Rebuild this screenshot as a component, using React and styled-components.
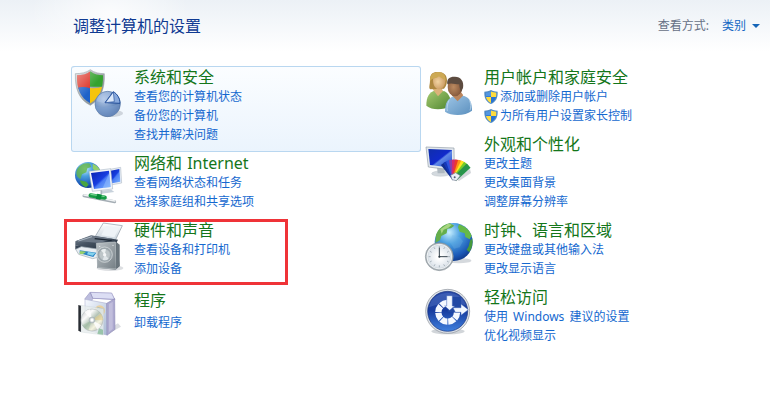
import React from 'react';
import styled, { createGlobalStyle, css } from 'styled-components';

const GlobalStyle = createGlobalStyle`
  * { box-sizing: border-box; }
  body {
    margin: 0;
    background: #fff;
    font-family: "Noto Sans", "Noto Sans CJK SC", sans-serif;
    font-size: 12px;
  }
`;

const Page = styled.main`
  width: 770px;
  height: 415px;
  overflow: hidden;
  background:
    radial-gradient(ellipse 80px 50px at 110px 14px, rgba(255, 255, 255, 0.75), rgba(255, 255, 255, 0) 100%),
    linear-gradient(#ecf1f6 0, #f0f4f8 12px, #f8fafc 34px, #fff 52px);
`;

const Header = styled.header`
  display: flex;
  align-items: center;
  justify-content: space-between;
  height: 66px;
  padding: 0 10px 14px 73px;
`;

const Heading = styled.h1`
  margin: 0;
  font-size: 16px;
  font-weight: 400;
  line-height: 20px;
  color: #0f3a92;
  white-space: nowrap;
`;

const ViewBy = styled.div`
  display: flex;
  align-items: center;
  line-height: 18px;
  color: #667085;
  white-space: nowrap;
`;

const ViewButton = styled.button`
  display: flex;
  align-items: center;
  gap: 6px;
  margin-left: 13px;
  padding: 0;
  border: 0;
  background: none;
  font: inherit;
  color: #1467c4;
`;

const Caret = styled.span`
  border: 4px solid transparent;
  border-top-color: #1565b8;
  border-bottom: 0;
`;

const Columns = styled.div`
  display: grid;
  grid-template-columns: 350px 349px;
  padding-left: 71px;
  align-items: start;
`;

const Column = styled.section`
  display: flex;
  flex-direction: column;
`;

const Category = styled.article`
  position: relative;
  display: flex;
  gap: 10px;
  margin-top: ${(p) => (p.$roomy ? 3 : 0)}px;
  padding: 0 0 7px 3px;
  border: 1px solid transparent;
  border-left: 0;
  ${(p) =>
    p.$hovered &&
    css`
      border-color: #b9d7f0;
      border-radius: 3px;
      background: linear-gradient(#fbfdff, #ebf4fd);
      box-shadow: inset 1px 0 #b9d7f0;
    `}
`;

const IconBox = styled.svg`
  flex: none;
  width: 50px;
  height: 50px;
  margin-top: 1px;
  overflow: visible;
`;

const Body = styled.div`
  display: flex;
  flex-direction: column;
  align-items: flex-start;
  gap: ${(p) => (p.$roomy ? 3 : 0)}px;
`;

const Title = styled.h2`
  margin: 0;
  font-size: 16px;
  font-weight: 400;
  line-height: 20px;
  height: 20px;
  color: #14761a;
  white-space: nowrap;
  word-spacing: 1px;
`;

const Task = styled.a`
  display: flex;
  align-items: center;
  gap: 2px;
  height: 19px;
  line-height: 19px;
  color: #1468cf;
  white-space: nowrap;
  word-spacing: 2px;
`;

const ShieldBox = styled.svg`
  flex: none;
  width: 14px;
  height: 14px;
`;

const Highlight = styled.div`
  position: absolute;
  left: -7px;
  top: -1px;
  width: 224px;
  height: 66px;
  border: 3px solid #ef3338;
  pointer-events: none;
`;

const SecurityIcon = () => (
  <IconBox viewBox="42 24 150 150">
    <defs>
      <clipPath id="secShield"><path d="M91 34c11 9 25 12 38 12 1 39-9 68-38 84C61 114 50 86 51 46c15 0 29-3 40-12z" /></clipPath>
      <linearGradient id="shieldRim" x1="0" y1="0" x2="1" y2="1"><stop offset="0" stopColor="#e8ebec" /><stop offset=".5" stopColor="#a6adb0" /><stop offset="1" stopColor="#747e84" /></linearGradient>
      <linearGradient id="shine" x1="0" y1="0" x2="1" y2="1"><stop offset="0" stopColor="#fff" stopOpacity=".5" /><stop offset=".55" stopColor="#fff" stopOpacity="0" /></linearGradient>
      <radialGradient id="disc" cx=".35" cy=".3" r=".8"><stop offset="0" stopColor="#b7cce9" /><stop offset=".55" stopColor="#7092c2" /><stop offset="1" stopColor="#3d5d94" /></radialGradient>
    </defs>
    <ellipse cx="152" cy="160" rx="37" ry="11" fill="#8d95a0" opacity=".35" />
    <path d="M91 29c12 9 28 12 42 12 2 44-10 76-42 95C57 118 45 88 46 41c17 0 33-3 45-12z" fill="url(#shieldRim)" stroke="#8e979c" strokeWidth="1.5" />
    <g clipPath="url(#secShield)">
      <path d="M45 28h45v58H45z" fill="#dc3327" /><path d="M90 28h45v52H90z" fill="#35a22f" />
      <path d="M45 85q24-8 45 0v50H45z" fill="#1e62c9" /><path d="M90 84q24 3 45-7v58H90z" fill="#f5c40d" />
      <path d="M45 28h90v108H45z" fill="url(#shine)" />
    </g>
    <circle cx="143" cy="132" r="38" fill="url(#disc)" stroke="#5878a6" strokeWidth="2" />
    <path d="M143 132 110 124a34 34 0 0 1 43-27z" fill="#b9cdea" opacity=".4" />
    <path d="M106 139q38 8 73-9c2 23-14 39-35 39-22 0-34-13-38-30z" fill="#7fa2d2" opacity=".5" />
    <path d="M160 95c12 7 20 20 20 35l-45-2z" fill="#88a9dc" stroke="#234f9a" strokeWidth="3" />
    <path d="M160 96l3 29-27 3z" fill="#dce9fa" stroke="#234f9a" strokeWidth="2" />
  </IconBox>
);

const GlobeDefs = ({ id }) => (
  <radialGradient id={id} cx=".38" cy=".25" r=".85">
    <stop offset="0" stopColor="#c8efff" /><stop offset=".35" stopColor="#4a9fe0" /><stop offset=".75" stopColor="#1b58b6" /><stop offset="1" stopColor="#0c2c77" />
  </radialGradient>
);

const NetworkIcon = () => (
  <IconBox viewBox="42 12 150 150">
    <defs>
      <GlobeDefs id="netGlobe" />
      <linearGradient id="netScreen" x1="0" y1="0" x2="1" y2="1"><stop offset="0" stopColor="#071fb0" /><stop offset=".5" stopColor="#173ee0" /><stop offset=".58" stopColor="#4a7df5" /><stop offset="1" stopColor="#7eb5ff" /></linearGradient>
    </defs>
    <circle cx="84" cy="75" r="39" fill="url(#netGlobe)" />
    <path d="M52 57c8-14 24-20 38-16l4 10-12 4-3 12-13 6-5 15-8-7c-5-7-5-16-1-24z" fill="#64b545" opacity=".8" />
    <path d="M98 41c12 5 18 11 22 19l-12 5-10-9z" fill="#92d069" /><path d="M60 91l19 4 7 9-8 8c-11-5-17-11-18-21z" fill="#48a440" />
    <path d="M139 60l43-8 3 47-38 7z" fill="#e7edf5" stroke="#a4b0bf" strokeWidth="1.5" /><path d="M145 64l33-7 3 38-33 6z" fill="url(#netScreen)" />
    <path d="M122 122l32-3 9 7-38 5z" fill="#c7d1db" />
    <path d="M87 64l65-8 6 61-61 7z" fill="#f2f5f9" stroke="#9babbd" strokeWidth="1.5" />
    <path d="M93 69l54-7 5 49-50 6z" fill="url(#netScreen)" /><path d="M148 68l-20 46 24-3z" fill="#9ec7ff" opacity=".45" />
    <path d="M124 121v12" stroke="#a9b4bd" strokeWidth="5" />
    <path d="M72 137l92 18" stroke="#a4adb4" strokeWidth="9" strokeLinecap="round" /><path d="M72 135l92 18" stroke="#f0f3f4" strokeWidth="5" strokeLinecap="round" />
    <path d="M92 136l42 7" stroke="#179c46" strokeWidth="13" strokeLinecap="round" /><path d="M93 133l39 6" stroke="#72d48e" strokeWidth="4" strokeLinecap="round" />
    <path d="M112 131l14 3-5 15-14-3z" fill="#078b3a" />
  </IconBox>
);

const PrinterIcon = () => (
  <IconBox viewBox="42 21 150 150">
    <defs>
      <linearGradient id="printTop" x1="0" y1="0" x2="1" y2="1"><stop offset="0" stopColor="#7f8b99" /><stop offset=".4" stopColor="#465362" /><stop offset="1" stopColor="#202b37" /></linearGradient>
      <linearGradient id="speaker" x1="0" y1="0" x2="1" y2="1"><stop offset="0" stopColor="#bcc3c7" /><stop offset="1" stopColor="#747e84" /></linearGradient>
      <linearGradient id="paper" x1="0" y1="0" x2="0" y2="1"><stop offset="0" stopColor="#fff" /><stop offset="1" stopColor="#c9d4dd" /></linearGradient>
    </defs>
    <ellipse cx="150" cy="162" rx="40" ry="9" fill="#747d87" opacity=".25" />
    <path d="M130 27l57 8-21 44-62-9z" fill="url(#paper)" stroke="#8c99a5" strokeWidth="2" />
    <path d="M138 35l39 6-14 29-39-6z" fill="#eef3f7" />
    <path d="M46 82l47-18 81 13-15 31-60-3-53-11z" fill="url(#printTop)" />
    <path d="M48 81l47-16 63 9-39 13z" fill="#6c7886" /><path d="M55 81l41-13" stroke="#adb8c4" strokeWidth="3" />
    <path d="M104 74l51 5" stroke="#1b2632" strokeWidth="4" />
    <path d="M46 94l68 11-5 14-63-13z" fill="#374555" />
    <path d="M47 106l17-8 54 8v23l-20 5-42-13z" fill="#e8edf1" stroke="#9da9b2" strokeWidth="2" />
    <path d="M59 109l50 7-9 13-41-11z" fill="#2a84c4" /><path d="M61 111l18 2-11 8-10-2z" fill="#98d06c" /><path d="M84 114l22 3-8 8-17-4z" fill="#84d3ed" />
    <path d="M111 87l59-4 9 73-12 11-56-6z" fill="#57636c" /><path d="M109 88l57-4 3 81-56-4z" fill="url(#speaker)" stroke="#c3cacd" strokeWidth="2" />
    <path d="M169 84l10 8v64l-11 9z" fill="#69747b" />
    <circle cx="134" cy="122" r="23" fill="#9ba5aa" stroke="#dfe4e6" strokeWidth="2" /><circle cx="134" cy="122" r="17" fill="#bdc5c8" stroke="#a0abb0" strokeWidth="2" />
    <path d="M134 122l-11-13a17 17 0 0 1 15-3z" fill="#e9eeef" /><path d="M134 122l12 12a17 17 0 0 1-18 3z" fill="#dfe5e8" /><circle cx="134" cy="122" r="5" fill="#f4f6f7" />
    <circle cx="119" cy="97" r="2" fill="#e7ecee" /><circle cx="159" cy="94" r="2" fill="#e7ecee" />
  </IconBox>
);

const ProgramsIcon = () => (
  <IconBox viewBox="42 18 150 150">
    <defs>
      <linearGradient id="boxFront" x1="0" y1="0" x2="1" y2="1"><stop offset="0" stopColor="#f7faff" /><stop offset="1" stopColor="#a9bad5" /></linearGradient>
      <linearGradient id="discShine" x1="0" y1="0" x2="1" y2="1"><stop offset="0" stopColor="#b8bec1" /><stop offset=".3" stopColor="#fafafa" /><stop offset=".5" stopColor="#b5c4b7" /><stop offset=".7" stopColor="#f4f3df" /><stop offset="1" stopColor="#999fa5" /></linearGradient>
    </defs>
    <path d="M144 147l39-22-9-10-35 20z" fill="#999eab" opacity=".35" />
    <path d="M91 22l66 8 9 15-78-5z" fill="#a6a4cf" /><path d="M91 22l64 2 9 19-66-3z" fill="#dcdef4" stroke="#9592bf" strokeWidth="2" />
    <path d="M74 42l16-20 8 18-6 21z" fill="#bcbdde" stroke="#8e8db7" strokeWidth="1.5" />
    <path d="M75 43l65 12 1 95-66-16z" fill="url(#boxFront)" stroke="#a2a4c9" strokeWidth="1.5" />
    <path d="M140 55l24-14 1 92-24 18z" fill="#aca9cf" stroke="#827fae" strokeWidth="1.5" /><path d="M147 57l11-7v82l-11 9z" fill="#d3d0e7" opacity=".55" />
    <circle cx="119" cy="77" r="16" fill="#f2c978" opacity=".65" /><path d="M112 65l20 7-5 18-19-5z" fill="#75a9d0" opacity=".5" />
    <path d="M55 60l8 2v79l-8-4z" fill="#292d33" />
    <path d="M63 61l68 10v79l-68-9z" fill="#e8eeee" opacity=".78" stroke="#b9c5ca" />
    <circle cx="96" cy="105" r="33" fill="url(#discShine)" stroke="#a8b1b3" strokeWidth="1.5" />
    <path d="M96 105L73 81a32 32 0 0 1 17-8zM96 105l28 16a32 32 0 0 1-12 13z" fill="#fff" opacity=".8" />
    <path d="M96 105l26-19q8 9 7 20z" fill="#e0c26b" opacity=".45" /><path d="M96 105l-29 16q6 11 18 15z" fill="#7da986" opacity=".3" />
    <circle cx="96" cy="105" r="9" fill="#c2cbcd" stroke="#8c999d" /><circle cx="96" cy="105" r="5" fill="#fff" />
    <path d="M117 130l12 4v15l-17-2z" fill="#63aa76" opacity=".55" />
  </IconBox>
);

const UsersIcon = () => (
  <IconBox viewBox="12 24 150 150">
    <defs>
      <linearGradient id="greenTop" x1="0" y1="0" x2="1" y2="1"><stop offset="0" stopColor="#a8cc73" /><stop offset="1" stopColor="#4f8630" /></linearGradient>
      <linearGradient id="blueTop" x1="0" y1="0" x2="1" y2="1"><stop offset="0" stopColor="#9fc6e6" /><stop offset="1" stopColor="#5a8fbe" /></linearGradient>
      <radialGradient id="skinA" cx=".4" cy=".45" r=".65"><stop stopColor="#f2d3a2" /><stop offset="1" stopColor="#c9985f" /></radialGradient>
      <radialGradient id="skinB" cx=".4" cy=".5" r=".65"><stop stopColor="#bb8a60" /><stop offset="1" stopColor="#7c5036" /></radialGradient>
    </defs>
    <path d="M19 137c0-26 8-40 27-46l28 3c15 8 20 26 17 44-22 13-55 13-72-1z" fill="url(#greenTop)" />
    <path d="M38 88l16 21 15-16-8-16-18 1z" fill="#dcb279" />
    <path d="M31 88c-6-4-1-13-1-27-1-20 10-26 25-25 16 0 26 9 26 25 0 9-2 18-9 25z" fill="#ae8840" />
    <path d="M39 60c0-9 8-14 18-14s19 6 19 17-7 24-18 25c-11 0-19-11-19-28z" fill="url(#skinA)" />
    <path d="M30 65c4-12 20-8 27-16 6 6 15 7 20 14 1-18-8-27-23-27-17 0-25 11-24 29z" fill="#cda954" />
    <path d="M75 155c0-26 9-42 28-47h30c17 6 23 22 23 44-19 16-61 17-81 3z" fill="url(#blueTop)" />
    <path d="M94 104l19 20 17-18-10-14-20 1z" fill="#ba855d" />
    <ellipse cx="105" cy="81" rx="22" ry="28" fill="url(#skinB)" />
    <path d="M82 73c-3-18 9-24 23-23 17 0 28 14 24 34l-6 12c-4-10-5-17-5-23-12 0-26-6-36 0z" fill="#5d4c40" />
    <path d="M87 121c-5 11-7 24-5 32M149 121c4 11 4 22 1 30" fill="none" stroke="#d3e8f7" strokeWidth="3" opacity=".6" />
  </IconBox>
);

const SWATCHES = ['#132f8f', '#1638b8', '#2f55dd', '#8c3faa', '#d52b70', '#ee392c', '#ff9418', '#ffe51f', '#73cc2a', '#27954a'];

const AppearanceIcon = () => (
  <IconBox viewBox="12 15 150 150">
    <defs>
      <linearGradient id="bigScreen" x1="0" y1="0" x2="1" y2="1"><stop offset="0" stopColor="#102eaa" /><stop offset=".5" stopColor="#102acb" /><stop offset=".56" stopColor="#6089e7" /><stop offset="1" stopColor="#1745cf" /></linearGradient>
    </defs>
    <ellipse cx="62" cy="131" rx="27" ry="8" fill="#d3d9de" stroke="#abb4ba" /><path d="M51 110l23 5v15H53z" fill="#aeb8c0" />
    <path d="M18 51l84 3 1 67-78-10z" fill="#e2e8ed" stroke="#929da8" strokeWidth="2" /><path d="M25 57l71 3v53l-66-8z" fill="url(#bigScreen)" />
    <path d="M107 148l43-31 3 12-36 24z" fill="#9299a3" opacity=".4" />
    {SWATCHES.map((color, i) => (
      <path key={color} d="M97 147L95 89h17l-1 58z" fill={color} transform={`rotate(${-36 + i * 9.2} 104 147)`} />
    ))}
    <path d="M92 136l15-8 14 9-12 15-13-3z" fill="#e9eff5" stroke="#747e91" strokeWidth="2" /><circle cx="104" cy="142" r="3" fill="#4f5b75" />
  </IconBox>
);

const ClockIcon = () => (
  <IconBox viewBox="12 18 150 150">
    <defs><GlobeDefs id="timeGlobe" /><radialGradient id="dial"><stop offset=".2" stopColor="#fff" /><stop offset="1" stopColor="#dce3ea" /></radialGradient></defs>
    <ellipse cx="116" cy="137" rx="38" ry="8" fill="#596979" opacity=".25" />
    <circle cx="101" cy="81" r="57" fill="url(#timeGlobe)" />
    <path d="M48 60c7-19 22-31 42-35l13 7-10 8-11 1-2 14-16 8-4 13-14 8z" fill="#65ae4b" /><path d="M61 43l23-17 12 3-12 10-13 5-6 12z" fill="#a7d581" />
    <path d="M117 28c20 7 31 17 38 34l-6 11-13-7-2-11-15-5-5-13z" fill="#65b948" /><path d="M150 77l7-7c2 16-1 30-9 42l-8-8 6-10z" fill="#469a3c" />
    <path d="M97 60l22 7 10 12-10 18-17 4-12-19z" fill="#76b6e5" opacity=".3" />
    <circle cx="58" cy="125" r="42" fill="#a9b1b7" stroke="#7d868d" strokeWidth="1.5" /><circle cx="58" cy="125" r="38" fill="#f7f9fa" /><circle cx="58" cy="125" r="35" fill="url(#dial)" stroke="#bbc4ca" />
    <path d="M58 93v6M58 151v6M26 125h6M84 125h6M42 97l3 5M74 97l-3 5M42 153l3-5M74 153l-3-5M30 109l5 3M86 109l-5 3M30 141l5-3M86 141l-5-3" stroke="#8996a0" strokeWidth="2" />
    <path d="M58 98v27h25" fill="none" stroke="#37444e" strokeWidth="3" /><circle cx="58" cy="125" r="3" fill="#24313c" />
  </IconBox>
);

const AccessIcon = () => (
  <IconBox viewBox="12 15 150 150">
    <defs><linearGradient id="access" x1="0" y1="0" x2="0" y2="1"><stop stopColor="#2a4aa8" /><stop offset=".48" stopColor="#173c9f" /><stop offset="1" stopColor="#3f80de" /></linearGradient></defs>
    <ellipse cx="84" cy="145" rx="50" ry="9" fill="#687382" opacity=".3" />
    <circle cx="83" cy="85" r="66" fill="#dfe4ea" stroke="#899099" strokeWidth="2" /><circle cx="83" cy="85" r="60" fill="url(#access)" stroke="#17317c" strokeWidth="2" />
    <path d="M27 73c7-32 33-43 58-43 26 0 45 15 53 37-31-10-76-8-111 6z" fill="#7c9adb" opacity=".25" />
    <circle cx="83" cy="88" r="28" fill="none" stroke="#f4f8ff" strokeWidth="19" strokeDasharray="19.5 2.5" pathLength="176" transform="rotate(1 83 88)" />
    <path d="M83 87V42h40v45z" fill="#2148a4" />
    <path d="M80 38h17v31h7L89 82 74 69h6z" fill="#f2f7ff" stroke="#3c62b7" strokeWidth="1.5" />
    <path d="M99 74h24V63l22 17-22 17v-9h-17z" fill="#f2f7ff" stroke="#3c62b7" strokeWidth="1.5" />
  </IconBox>
);

const UacShield = () => (
  <ShieldBox viewBox="0 0 42 42">
    <defs><clipPath id="uacShape"><path d="M21 4c5 3 11 4 16 4 1 14-4 24-16 31C9 32 4 22 5 8c6 0 11-1 16-4z" /></clipPath></defs>
    <path d="M21 0c6 4 13 5 20 5 1 19-5 30-20 37C6 35 0 24 1 5c7 0 14-1 20-5z" fill="#538cc4" />
    <g clipPath="url(#uacShape)"><path d="M0 0h21v21H0zM21 21h21v21H21z" fill="#2874d2" /><path d="M21 0h21v21H21zM0 21h21v21H0z" fill="#ffdc3d" /><path d="M5 7l16-3v15H5z" fill="#7fb8ee" opacity=".5" /></g>
  </ShieldBox>
);

const LEFT = [
  { icon: SecurityIcon, title: '系统和安全', tasks: ['查看您的计算机状态', '备份您的计算机', '查找并解决问题'], hovered: true },
  { icon: NetworkIcon, title: '网络和 Internet', tasks: ['查看网络状态和任务', '选择家庭组和共享选项'] },
  { icon: PrinterIcon, title: '硬件和声音', tasks: ['查看设备和打印机', '添加设备'], highlighted: true },
  { icon: ProgramsIcon, title: '程序', tasks: ['卸载程序'], roomy: true },
];

const RIGHT = [
  { icon: UsersIcon, title: '用户帐户和家庭安全', tasks: ['添加或删除用户帐户', '为所有用户设置家长控制'], shielded: true },
  { icon: AppearanceIcon, title: '外观和个性化', tasks: ['更改主题', '更改桌面背景', '调整屏幕分辨率'] },
  { icon: ClockIcon, title: '时钟、语言和区域', tasks: ['更改键盘或其他输入法', '更改显示语言'] },
  { icon: AccessIcon, title: '轻松访问', tasks: ['使用 Windows 建议的设置', '优化视频显示'] },
];

const CategoryItem = ({ icon: Icon, title, tasks, hovered, highlighted, roomy, shielded }) => (
  <Category $hovered={hovered} $roomy={roomy}>
    <Icon />
    <Body $roomy={roomy}>
      <Title>{title}</Title>
      {tasks.map((task) => (
        <Task key={task}>
          {shielded && <UacShield />}
          {task}
        </Task>
      ))}
    </Body>
    {highlighted && <Highlight />}
  </Category>
);

export default function App() {
  return (
    <>
      <GlobalStyle />
      <Page>
        <Header>
          <Heading>调整计算机的设置</Heading>
          <ViewBy>
            查看方式:
            <ViewButton>类别<Caret /></ViewButton>
          </ViewBy>
        </Header>
        <Columns>
          <Column>{LEFT.map((c) => <CategoryItem key={c.title} {...c} />)}</Column>
          <Column>{RIGHT.map((c) => <CategoryItem key={c.title} {...c} />)}</Column>
        </Columns>
      </Page>
    </>
  );
}
